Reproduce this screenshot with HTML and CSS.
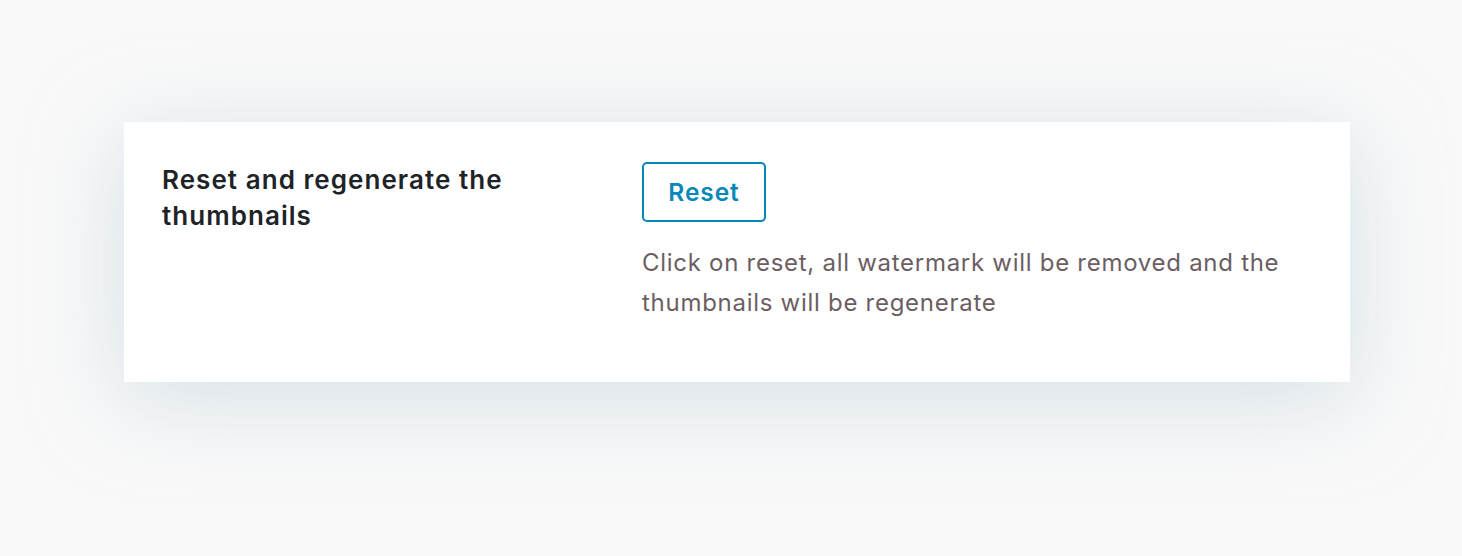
FILE: index.html
```html
<!DOCTYPE html>
<html lang="en">
<head>
  <meta charset="UTF-8" />
  <meta name="viewport" content="width=device-width, initial-scale=1.0"/>
  <title>Reset thumbnails</title>
  <link rel="stylesheet" href="styles.css">
</head>
<body>

  <div class="card">
    <div class="label">
      <h3>Reset and regenerate the thumbnails</h3>
    </div>
    <div class="field">
      <button class="btn-reset">Reset</button>
      <p class="desc">Click on reset, all watermark will be removed and the thumbnails will be regenerate</p>
    </div>
  </div>

</body>
</html>
```

FILE: styles.css
```css
html {
  background-color: #f9f9f9;
}
body {
  margin: 0;
  font-family: Inter, 'Noto Sans', sans-serif;
  min-height: 100vh;
  box-sizing: border-box;
  padding: 122px 112px 0 124px;
}
.card {
  background: #fff;
  height: 260px;
  box-sizing: border-box;
  padding: 40px 38px;
  display: flex;
  box-shadow: 0 16px 90px rgba(178, 200, 214, 0.5);
}
.label {
  width: 480px;
  flex-shrink: 0;
}
.label h3 {
  margin: 0;
  width: 420px;
  font-size: 26px;
  line-height: 36px;
  font-weight: 600;
  letter-spacing: 1.05px;
  color: #1d2327;
}
.field {
  flex: 1;
}
.btn-reset {
  width: 124px;
  height: 60px;
  border: 2px solid #0a87b9;
  border-radius: 5px;
  background: #fff;
  color: #0a87b9;
  font-family: inherit;
  font-size: 24.5px;
  font-weight: 600;
  letter-spacing: 0.9px;
  cursor: pointer;
}
.desc {
  margin: 21px 0 0;
  max-width: 660px;
  font-size: 24px;
  line-height: 40px;
  letter-spacing: 0.72px;
  color: #6b5e63;
}
```
